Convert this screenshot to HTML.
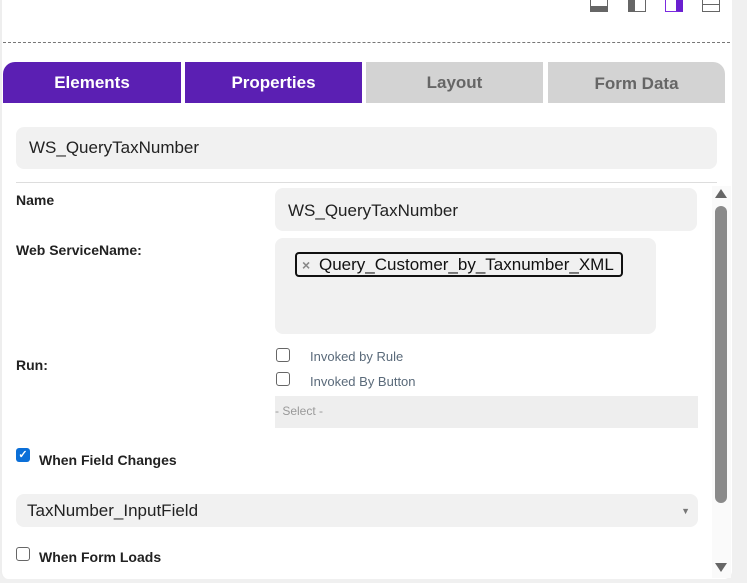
<!DOCTYPE html>
<html><head><style>
*{margin:0;padding:0;box-sizing:border-box}
body{width:747px;height:583px;background:#f0f0f0;position:relative;overflow:hidden;font-family:"Liberation Sans",sans-serif}
.panel{position:absolute;left:0;top:0;width:732px;height:579px;background:#fff;border-left:2px solid #eee;border-radius:0 0 8px 8px}
.a{position:absolute}
.tab{position:absolute;top:62px;height:41px;font-weight:bold;font-size:17px;text-align:center;line-height:41px}
.p{background:#5b1fb3;color:#fff}
.g{background:#d3d3d3;color:#666}
.in{position:absolute;background:#f1f1f1;border-radius:8px;font-size:17px;color:#222}
.lbl{position:absolute;font-weight:bold;font-size:14px;color:#222}
.cb{position:absolute;width:14px;height:14px;border:1.5px solid #666;border-radius:3px;background:#fff}
.ct{position:absolute;font-size:13px;color:#5a6a7a}
.ic{position:absolute;top:0;width:18px;height:12px;border:1.5px solid #666;border-top:none}
.tri{position:absolute;width:0;height:0;border-left:6px solid transparent;border-right:6px solid transparent}
</style></head><body>
<div class="panel"></div>
<div class="ic" style="left:590px;border-bottom:6px solid #666"></div>
<div class="ic" style="left:628px;border-left:7px solid #666"></div>
<div class="ic" style="left:665px;border-color:#7b2be0;border-right:7px solid #6a1fd0"></div>
<div class="ic" style="left:702px"><div style="position:absolute;left:0;right:0;top:4px;border-top:1.5px solid #666"></div></div>
<div class="a" style="left:3px;top:42px;width:727px;border-top:1px dashed #777"></div>
<div class="tab p" style="left:3px;width:178px;border-radius:12px 0 0 0">Elements</div>
<div class="tab p" style="left:185px;width:177px">Properties</div>
<div class="tab g" style="left:366px;width:177px">Layout</div>
<div class="tab g" style="left:548px;width:177px;border-radius:0 12px 0 0;line-height:44px">Form Data</div>
<div class="in" style="left:16px;top:127px;width:701px;height:42px;line-height:42px;padding-left:13px">WS_QueryTaxNumber</div>
<div class="a" style="left:16px;top:182px;width:701px;border-top:1px solid #ddd"></div>
<div class="lbl" style="left:16px;top:192px">Name</div>
<div class="in" style="left:275px;top:188px;width:422px;height:43px;line-height:45px;padding-left:13px">WS_QueryTaxNumber</div>
<div class="lbl" style="left:16px;top:242px">Web ServiceName:</div>
<div class="in" style="left:275px;top:238px;width:381px;height:96px"></div>
<div class="a" style="left:295px;top:252px;width:328px;height:25px;border:2px solid #111;border-radius:4px;font-size:17px;line-height:21px;padding-left:22px;color:#111">Query_Customer_by_Taxnumber_XML<span style="position:absolute;left:5px;top:1px;color:#888;font-size:14px;font-weight:bold">×</span></div>
<div class="lbl" style="left:16px;top:357px">Run:</div>
<div class="cb" style="left:276px;top:348px"></div>
<div class="ct" style="left:310px;top:349px">Invoked by Rule</div>
<div class="cb" style="left:276px;top:372px"></div>
<div class="ct" style="left:310px;top:374px">Invoked By Button</div>
<div class="a" style="left:275px;top:396px;width:423px;height:32px;background:#eee;font-size:12px;color:#999;line-height:31px">- Select -</div>
<div class="a" style="left:16px;top:448px;width:14px;height:14px;background:#0b6fd8;border-radius:3px;color:#fff;font-size:11px;text-align:center;line-height:14px;font-weight:bold">✓</div>
<div class="lbl" style="left:39px;top:452px">When Field Changes</div>
<div class="in" style="left:16px;top:494px;width:682px;height:33px;line-height:33px;padding-left:11px">TaxNumber_InputField<span style="position:absolute;right:8px;top:1px;font-size:9px;color:#777">▼</span></div>
<div class="cb" style="left:16px;top:547px"></div>
<div class="lbl" style="left:39px;top:549px">When Form Loads</div>
<div class="a" style="left:712px;top:186px;width:19px;height:392px;background:#fafafa"></div>
<div class="a" style="left:715px;top:206px;width:12px;height:297px;background:#8a8a8a;border-radius:6px"></div>
<div class="tri" style="left:715px;top:189px;border-bottom:9px solid #666"></div>
<div class="tri" style="left:715px;top:563px;border-top:9px solid #666"></div>
</body></html>
